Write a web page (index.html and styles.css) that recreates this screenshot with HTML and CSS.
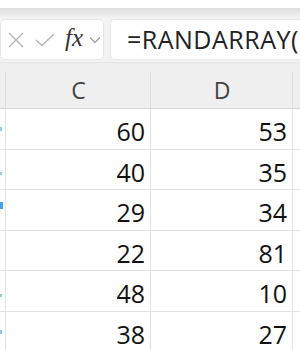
FILE: index.html
```html
<!DOCTYPE html>
<html lang="en">
<head>
	<meta charset="UTF-8">
	<title>Sheet</title>

	<link rel="stylesheet" href="styles.css">
</head>
<body>

	<div class="ribbon-edge"></div>

	<div class="formula-bar">
		<div class="name-box">
			<svg class="icon" width="16" height="16" viewBox="0 0 16 16">
				<path d="M1 1 L15 15 M15 1 L1 15" stroke="#b3b3b3" stroke-width="1.3" fill="none"/>
			</svg>
			<svg class="icon" width="20" height="14" viewBox="0 0 20 14">
				<path d="M1 7 L7 12.5 L19 1" stroke="#b3b3b3" stroke-width="1.3" fill="none"/>
			</svg>
			<span class="fx">fx</span>
			<svg class="icon chevron" width="12" height="8" viewBox="0 0 12 8">
				<path d="M1 1.5 L6 6.5 L11 1.5" stroke="#9a9a9a" stroke-width="1.2" fill="none"/>
			</svg>
		</div>
		<div class="formula-box">=RANDARRAY(</div>
	</div>

	<div class="sheet">
		<div class="head corner"></div>
		<div class="head col">C</div>
		<div class="head col">D</div>
		<div class="head rest"></div>

		<div class="row-num"><i class="mark m1"></i></div><div class="cell">60</div><div class="cell">53</div><div class="cell blank"></div>
		<div class="row-num"><i class="mark m2"></i></div><div class="cell">40</div><div class="cell">35</div><div class="cell blank"></div>
		<div class="row-num"><i class="mark m3"></i></div><div class="cell">29</div><div class="cell">34</div><div class="cell blank"></div>
		<div class="row-num"></div><div class="cell">22</div><div class="cell">81</div><div class="cell blank"></div>
		<div class="row-num"><i class="mark m2"></i></div><div class="cell">48</div><div class="cell">10</div><div class="cell blank"></div>
		<div class="row-num"><i class="mark m1"></i></div><div class="cell">38</div><div class="cell">27</div><div class="cell blank"></div>
	</div>

</body>
</html>
```

FILE: styles.css
```css
body {
	margin: 0;
	background: #fff;
	font-family: "Open Sans", "Noto Sans", sans-serif;
	overflow: hidden;
	width: 300px;
	height: 350px;
}

.ribbon-edge {
	height: 8px;
	background: #fff;
}

.formula-bar {
	display: flex;
	gap: 6px;
	height: 54px;
	box-sizing: border-box;
	padding: 11px 0 2px 0;
	background: linear-gradient(#dedede, #f3f3f3 10px);
}

.name-box, .formula-box {
	height: 41px;
	box-sizing: border-box;
	background: #fff;
	border: 1px solid #e6e6e6;
	border-radius: 5px;
}

.name-box {
	width: 104px;
	flex: none;
	display: flex;
	align-items: center;
	padding-left: 7px;
}

.name-box .icon {
	display: block;
}

.name-box svg:nth-child(2) {
	margin-left: 11px;
}

.fx {
	font-family: "Liberation Serif", serif;
	font-style: italic;
	font-size: 25px;
	color: #333;
	margin-left: 10px;
	line-height: 1;
	margin-top: -4px;
}

.chevron {
	margin-left: 6px;
}

.formula-box {
	flex: 1;
	border-right: 0;
	border-radius: 5px 0 0 5px;
	padding-left: 16px;
	font-size: 25px;
	letter-spacing: 0.5px;
	line-height: 38px;
	color: #222;
	white-space: nowrap;
	overflow: hidden;
}

.sheet {
	display: grid;
	grid-template-columns: 6px 145px 142px 1fr;
	grid-template-rows: 47px;
	grid-auto-rows: 40.6px;
}

.head {
	background: #efefef;
	border-top: 1px solid #e4e4e4;
	border-bottom: 1px solid #d6d6d6;
	box-sizing: border-box;
	position: relative;
}

.head.col {
	text-align: center;
	font-size: 23px;
	color: #444;
	line-height: 42px;
	padding-top: 6px;
}

.head.corner:after, .head.col:after {
	content: '';
	position: absolute;
	right: 0;
	top: 9px;
	bottom: 0;
	width: 1px;
	background: #dcdcdc;
}

.row-num, .cell {
	border-right: 1px solid #e3e3e3;
	border-bottom: 1px solid #e3e3e3;
	box-sizing: border-box;
}

.row-num {
	display: flex;
	align-items: center;
}

.mark {
	display: block;
	width: 2px;
	height: 4px;
	background: #8fcaf0;
}

.mark.m2 {
	margin-top: 8px;
	height: 3px;
}

.mark.m3 {
	width: 3px;
	height: 7px;
	background: #4aa2e2;
	margin-bottom: 8px;
}

.cell {
	text-align: right;
	padding: 3px 5px 0 0;
	font-size: 25px;
	line-height: 38px;
	color: #111;
	overflow: hidden;
}

.cell.blank {
	border-right: 0;
}
```
